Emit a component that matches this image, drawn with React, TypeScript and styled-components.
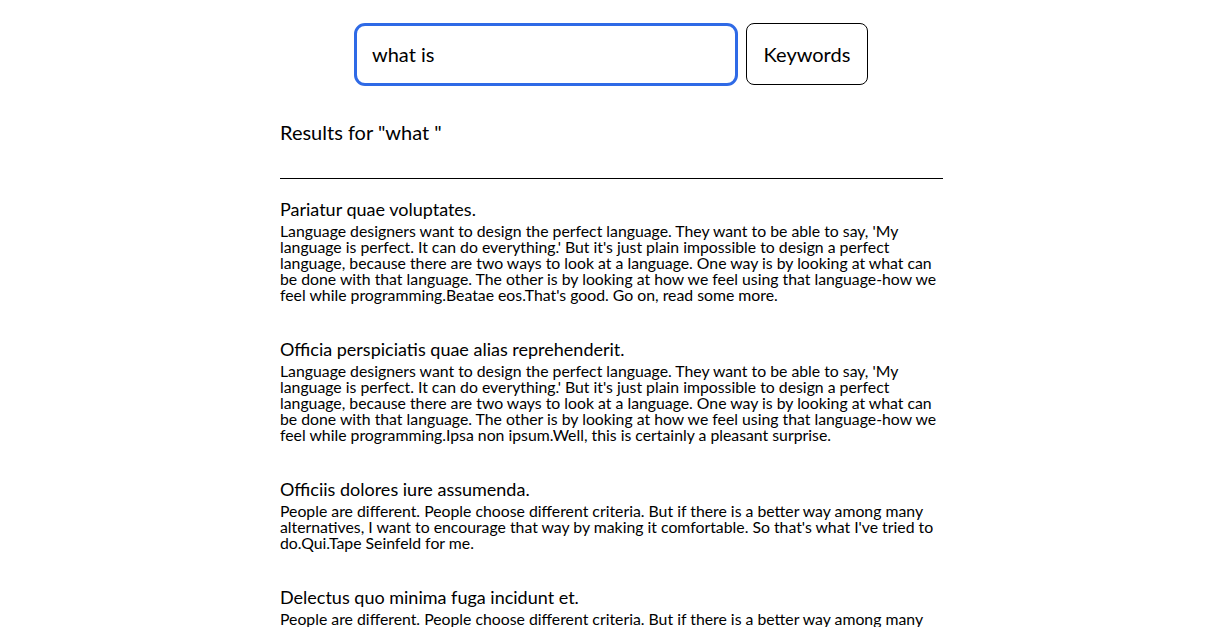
import React, { useState } from "react";
import styled, { createGlobalStyle } from "styled-components";

const GlobalStyle = createGlobalStyle`
    html, body {
        margin: 0;
        padding: 0;
        background: #ffffff;
    }
    body {
        font-family: Lato, "Liberation Sans", sans-serif;
        color: #000000;
    }
`;

interface Result {
    title: string;
    body: string;
}

const designers = "Language designers want to design the perfect language. They want to be able to say, 'My language is perfect. It can do everything.' But it's just plain impossible to design a perfect language, because there are two ways to look at a language. One way is by looking at what can be done with that language. The other is by looking at how we feel using that language-how we feel while programming.";
const people = "People are different. People choose different criteria. But if there is a better way among many alternatives, I want to encourage that way by making it comfortable. So that's what I've tried to do.";

const results: Result[] = [
    { title: "Pariatur quae voluptates.", body: designers + "Beatae eos.That's good. Go on, read some more." },
    { title: "Officia perspiciatis quae alias reprehenderit.", body: designers + "Ipsa non ipsum.Well, this is certainly a pleasant surprise." },
    { title: "Officiis dolores iure assumenda.", body: people + "Qui.Tape Seinfeld for me." },
    { title: "Delectus quo minima fuga incidunt et.", body: people + "Voluptas.That's good. Go on, read some more." },
];

export default function App() {
    const [query, setQuery] = useState("what is");

    return (
        <Page>
            <GlobalStyle />
            <SearchRow>
                <SearchInput value={query} onChange={e => setQuery(e.target.value)} />
                <ModeButton>Keywords</ModeButton>
            </SearchRow>
            <Column>
                <ResultsHeading>Results for "what "</ResultsHeading>
                <Divider />
                <ResultList>
                    {results.map(r => (
                        <ResultItem key={r.title}>
                            <ResultTitle>{r.title}</ResultTitle>
                            <ResultBody>{r.body}</ResultBody>
                        </ResultItem>
                    ))}
                </ResultList>
            </Column>
        </Page>
    );
}

const Page = styled.div`
    padding: 23px 0 0 12px;
    height: 627px;
    box-sizing: border-box;
    overflow: hidden;
`;

const SearchRow = styled.div`
    display: flex;
    justify-content: center;
    align-items: flex-start;
    gap: 8px;
    padding-right: 1px;
`;

const SearchInput = styled.input`
    box-sizing: border-box;
    width: 384px;
    height: 63px;
    padding: 0 15px 2px;
    border: 3px solid #2f6ae6;
    border-radius: 11px;
    outline: none;
    font-family: Lato, "Liberation Sans", sans-serif;
    font-size: 20px;
    color: #000;
    background: #fff;
`;

const ModeButton = styled.button`
    box-sizing: border-box;
    width: 122px;
    height: 62px;
    padding: 0;
    border: 1px solid #000;
    border-radius: 8px;
    background: #fff;
    font-family: Lato, "Liberation Sans", sans-serif;
    font-size: 20px;
    color: #000;
    cursor: pointer;
`;

const Column = styled.div`
    width: 663px;
    margin: 34px auto 0;
`;

const ResultsHeading = styled.h2`
    margin: 0;
    font-size: 20px;
    font-weight: 400;
    line-height: 24px;
`;

const Divider = styled.div`
    margin-top: 34px;
    border-top: 1px solid #000;
`;

const ResultList = styled.div`
    display: flex;
    flex-direction: column;
    gap: 35px;
    margin-top: 19px;
`;

const ResultItem = styled.div`
    display: flex;
    flex-direction: column;
    gap: 3px;
`;

const ResultTitle = styled.div`
    font-size: 18px;
    line-height: 22px;
`;

const ResultBody = styled.div`
    font-size: 15.8px;
    line-height: 16px;
`;
